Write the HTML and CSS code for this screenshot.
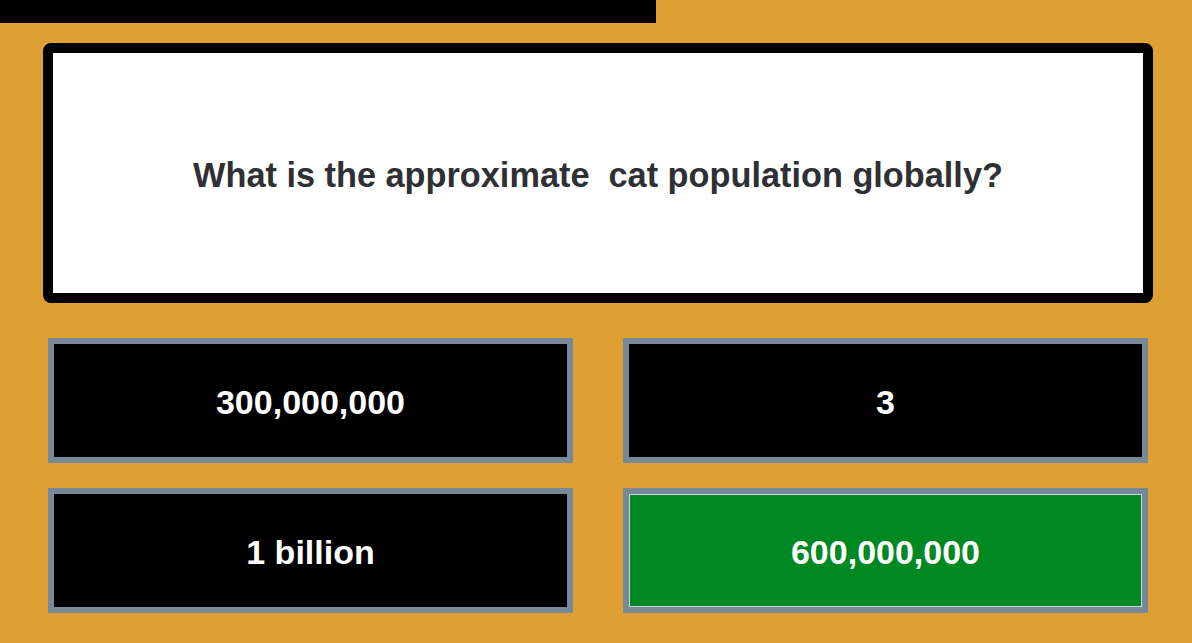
FILE: index.html
```html
<!DOCTYPE html>
<html>
<head>
<meta charset="utf-8">
<link rel="stylesheet" href="styles.css">
</head>
<body>
<div class="timer"><div class="timer-fill" style="width: 55.03%"></div></div>
<main class="quiz">
  <section class="question">
    <h1 class="question-text">What is the approximate &nbsp;cat population globally?</h1>
  </section>
  <section class="answers">
    <button class="answer">300,000,000</button>
    <button class="answer">3</button>
    <button class="answer">1 billion</button>
    <button class="answer correct">600,000,000</button>
  </section>
</main>
</body>
</html>
```

FILE: styles.css
```css
* { box-sizing: border-box; }
html, body {
  margin: 0;
  padding: 0;
  background: #dea032;
  font-family: "Liberation Sans", Arial, sans-serif;
}
body {
  width: 1192px;
  height: 643px;
  overflow: hidden;
}
.timer {
  height: 23px;
  width: 100%;
}
.timer-fill {
  height: 100%;
  background: #000;
}
.quiz {
  width: 1110px;
  margin: 20px 0 0 43px;
}
.question {
  height: 260px;
  background: #fff;
  border: 10px solid #000;
  border-radius: 8px;
  display: flex;
  align-items: center;
  justify-content: center;
}
.question-text {
  margin: 0;
  font-size: 34.3px;
  font-weight: bold;
  color: #2e3033;
  position: relative;
  top: 2px;
}
.answers {
  margin-top: 35px;
  padding: 0 5px;
  display: grid;
  grid-template-columns: 1fr 1fr;
  grid-auto-rows: 125px;
  column-gap: 50px;
  row-gap: 25px;
}
.answer {
  margin: 0;
  background: #000;
  border: 6px solid #778899;
  color: #fff;
  font-family: "Liberation Sans", Arial, sans-serif;
  font-size: 34px;
  font-weight: bold;
  display: flex;
  align-items: center;
  justify-content: center;
  padding: 3px 0 0;
}
.answer.correct {
  background: #008822;
  box-shadow: inset 0 0 0 1px #c8d6e4;
}
```
